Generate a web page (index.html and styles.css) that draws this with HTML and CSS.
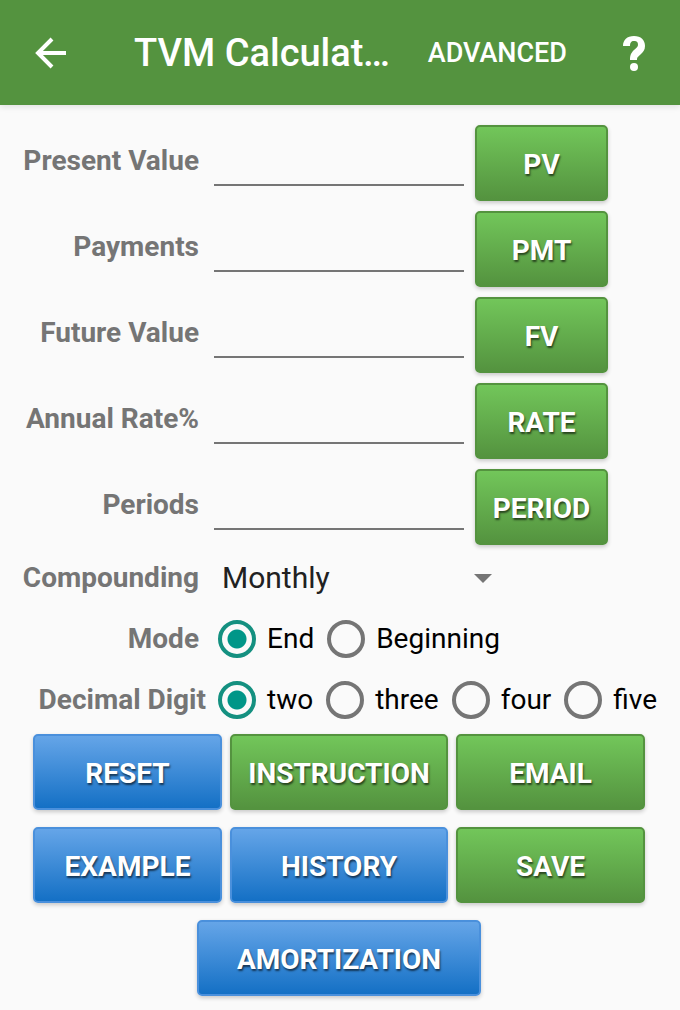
FILE: index.html
```html
<!DOCTYPE html>
<html lang="en">

<head>
  <meta charset="UTF-8">
  <meta name="viewport" content="width=device-width, initial-scale=1.0">
  <link rel="stylesheet" href="styles.css">
  <title>TVM Calculator</title>
</head>

<body>
  <header class="toolbar">
    <button type="button" class="icon-button" aria-label="Back">
      <svg width="32" height="32" viewBox="0 0 32 32" fill="none" stroke="#fff" stroke-width="4">
        <path d="M32 16H5M18 2L4 16l14 14" />
      </svg>
    </button>
    <h1 class="title">TVM Calculator</h1>
    <button type="button" class="menu-button">ADVANCED</button>
    <button type="button" class="icon-button" aria-label="Help">
      <svg width="24" height="36" viewBox="0 0 24 36" fill="#fff">
        <path d="M1 11C1 5 5 1 12 1s11 4 11 10c0 4-2 6-4 8-3 3-4 3-4 6H8c0-5 1-7 4-10 2-2 4-3 4-5 0-3-1-4-4-4s-4 2-4 5z" />
        <circle cx="12" cy="32" r="4" />
      </svg>
    </button>
  </header>

  <form class="calculator">
    <!-- values -->
    <div class="row field">
      <label class="name" for="pv">Present Value</label>
      <input class="value" id="pv" type="text" inputmode="decimal">
      <button type="button" class="button green">PV</button>
    </div>
    <div class="row field">
      <label class="name" for="pmt">Payments</label>
      <input class="value" id="pmt" type="text" inputmode="decimal">
      <button type="button" class="button green">PMT</button>
    </div>
    <div class="row field">
      <label class="name" for="fv">Future Value</label>
      <input class="value" id="fv" type="text" inputmode="decimal">
      <button type="button" class="button green">FV</button>
    </div>
    <div class="row field">
      <label class="name" for="rate">Annual Rate%</label>
      <input class="value" id="rate" type="text" inputmode="decimal">
      <button type="button" class="button green">RATE</button>
    </div>
    <div class="row field">
      <label class="name" for="periods">Periods</label>
      <input class="value" id="periods" type="text" inputmode="decimal">
      <button type="button" class="button green">PERIOD</button>
    </div>

    <!-- options -->
    <div class="options">
      <div class="row option">
        <label class="name" for="compounding">Compounding</label>
        <div class="dropdown">
          <select id="compounding">
            <option>Monthly</option>
          </select>
          <svg class="arrow" width="18" height="9" viewBox="0 0 18 9">
            <path d="M0 0h18L9 9z" fill="#757575" />
          </svg>
        </div>
      </div>
      <div class="row option" role="radiogroup" aria-labelledby="mode-name">
        <span class="name" id="mode-name">Mode</span>
        <div class="choices">
          <label class="choice"><input type="radio" name="mode" checked>End</label>
          <label class="choice"><input type="radio" name="mode">Beginning</label>
        </div>
      </div>
      <div class="row option digits" role="radiogroup" aria-labelledby="digit-name">
        <span class="name" id="digit-name">Decimal Digit</span>
        <div class="choices">
          <label class="choice"><input type="radio" name="digit" checked>two</label>
          <label class="choice"><input type="radio" name="digit">three</label>
          <label class="choice"><input type="radio" name="digit">four</label>
          <label class="choice"><input type="radio" name="digit">five</label>
        </div>
      </div>
    </div>

    <!-- actions -->
    <div class="actions">
      <button type="reset" class="button blue">RESET</button>
      <button type="button" class="button green">INSTRUCTION</button>
      <button type="button" class="button green">EMAIL</button>
      <button type="button" class="button blue">EXAMPLE</button>
      <button type="button" class="button blue">HISTORY</button>
      <button type="button" class="button green">SAVE</button>
      <button type="button" class="button blue wide">AMORTIZATION</button>
    </div>
  </form>
</body>

</html>
```

FILE: styles.css
```css
* {
  box-sizing: border-box;
}

body {
  margin: 0;
  font-family: Roboto, sans-serif;
  font-size: 28px;
  background-color: #fafafa;
  color: #111;
}

button,
input,
select {
  font-family: inherit;
}

.toolbar {
  display: flex;
  align-items: center;
  padding: 24px 16px 23px 20px;
  background-color: #54933f;
  box-shadow: 0 2px 6px rgba(0, 0, 0, 0.1);
}

.icon-button,
.menu-button {
  padding: 0;
  border: none;
  background: none;
  color: white;
  cursor: pointer;
}

.icon-button {
  display: flex;
  justify-content: center;
  align-items: center;
  width: 60px;
  height: 58px;
}

.menu-button {
  margin: 0 37px;
  font-size: 27px;
  font-weight: 500;
}

.title {
  flex: 1;
  min-width: 0;
  margin: 0 0 0 54px;
  overflow: hidden;
  font-size: 38px;
  font-weight: 500;
  line-height: 58px;
  color: white;
  white-space: nowrap;
  text-overflow: ellipsis;
}

.calculator {
  padding: 20px 0 12px;
}

.row {
  display: grid;
  align-items: center;
}

.name {
  font-weight: bold;
  line-height: 32px;
  color: #757575;
  text-align: right;
  white-space: nowrap;
}

.field {
  grid-template-columns: 199px 1fr 133px;
  padding-right: 72px;
  margin-bottom: 10px;
}

.field .name {
  padding-bottom: 4px;
}

.value {
  align-self: start;
  min-width: 0;
  height: 61px;
  margin: 0 11px 0 15px;
  padding: 12px 8px;
  border: none;
  border-bottom: 2px solid #757575;
  background: none;
  font-size: 28px;
  outline: none;
}

.value:focus {
  border-color: #009688;
}

.button {
  height: 76px;
  padding: 2px 0 0;
  border: 2px solid;
  border-radius: 5px;
  box-shadow: 0 2px 4px rgba(0, 0, 0, 0.2);
  font-size: 28px;
  font-weight: bold;
  color: white;
  text-shadow: 1px 2px 2px rgba(0, 0, 0, 0.6);
  cursor: pointer;
}

.green {
  border-color: #54933f;
  background: linear-gradient(#72c65a, #54933f);
}

.blue {
  border-color: #4a90dc;
  background: linear-gradient(#65a5e8, #1470c5);
}

.options {
  margin-top: -8px;
}

.option {
  grid-template-columns: 199px 1fr;
  column-gap: 19px;
  height: 61px;
}

.digits {
  grid-template-columns: 206px 1fr;
  column-gap: 12px;
}

.dropdown {
  position: relative;
  width: 286px;
}

.dropdown select {
  width: 100%;
  height: 48px;
  padding: 0 32px 0 4px;
  border: none;
  background: none;
  appearance: none;
  font-size: 30px;
  color: #212121;
}

/* arrow lies over the select */
.arrow {
  position: absolute;
  top: 20px;
  right: 12px;
  pointer-events: none;
}

.choices {
  display: flex;
  gap: 13px;
}

.choice {
  display: flex;
  align-items: center;
  gap: 11px;
  color: black;
}

.choice input {
  appearance: none;
  width: 38px;
  height: 38px;
  margin: 0;
  border: 4px solid #757575;
  border-radius: 50%;
}

.choice input:checked {
  border-color: #149080;
  background: radial-gradient(circle, #009688 9px, transparent 10px);
}

.actions {
  display: grid;
  grid-template-columns: 1fr 218px 1fr;
  gap: 17px 8px;
  padding: 4px 35px 0 33px;
}

.wide {
  grid-column: 1 / -1;
  justify-self: center;
  width: 284px;
}
```
